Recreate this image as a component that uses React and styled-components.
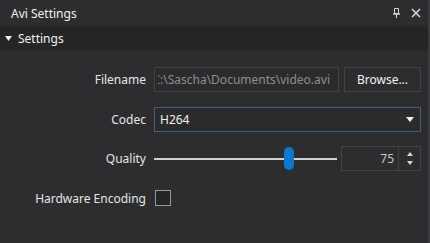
import React from "react";
import styled, { createGlobalStyle } from "styled-components";

const GlobalStyle = createGlobalStyle`
  html, body {
    margin: 0;
    padding: 0;
    background: #2d2d30;
  }
  * {
    box-sizing: border-box;
  }
`;

export default function App() {
  const quality = 75;

  return (
    <Panel>
      <GlobalStyle />
      <TitleBar>
        <Title>Avi Settings</Title>
        <TitleIcons>
          <svg width="7" height="10" viewBox="0 0 7 10">
            <path d="M1.5 0.5h4v5h-4z" fill="none" stroke="#d6d6d6" strokeWidth="1" />
            <path d="M0 6h7" stroke="#d6d6d6" strokeWidth="1.4" />
            <path d="M3.5 6v4" stroke="#d6d6d6" strokeWidth="1" />
          </svg>
          <svg width="10" height="10" viewBox="0 0 10 10">
            <path d="M1 1L9 9M9 1L1 9" stroke="#d6d6d6" strokeWidth="1.6" />
          </svg>
        </TitleIcons>
      </TitleBar>

      <SectionHeader>
        <svg width="7" height="5" viewBox="0 0 7 5">
          <path d="M0 0h7L3.5 5z" fill="#f1f1f1" />
        </svg>
        <span>Settings</span>
      </SectionHeader>

      <Form>
        <Label>Filename</Label>
        <Inline>
          <TextBox $disabled>
            <Clip>C:\Sascha\Documents\video.avi</Clip>
          </TextBox>
          <Button>Browse...</Button>
        </Inline>

        <Label>Codec</Label>
        <Select>
          <span>H264</span>
          <svg width="8" height="5" viewBox="0 0 8 5">
            <path d="M0 0h8L4 5z" fill="#f1f1f1" />
          </svg>
        </Select>

        <Label>Quality</Label>
        <Inline>
          <Slider>
            <Track />
            <Thumb style={{ left: `calc((100% - 10px) * ${quality / 100})` }} />
          </Slider>
          <SpinBox>
            <SpinValue>{quality}</SpinValue>
            <SpinButtons>
              <svg width="6" height="4" viewBox="0 0 6 4">
                <path d="M0 4h6L3 0z" fill="#d6d6d6" />
              </svg>
              <svg width="6" height="4" viewBox="0 0 6 4">
                <path d="M0 0h6L3 4z" fill="#d6d6d6" />
              </svg>
            </SpinButtons>
          </SpinBox>
        </Inline>

        <Label>Hardware Encoding</Label>
        <Inline>
          <CheckBox />
        </Inline>
      </Form>
    </Panel>
  );
}

const Panel = styled.div`
  width: 430px;
  height: 243px;
  display: flex;
  flex-direction: column;
  background: #2d2d30;
  border-right: 2px solid #3b3b3f;
  font-family: "Noto Sans", "Open Sans", sans-serif;
  font-size: 12px;
  color: #f1f1f1;
`;

const TitleBar = styled.div`
  height: 26px;
  display: flex;
  align-items: center;
  justify-content: space-between;
  padding: 0 7px 0 11px;
  background: #2d2d30;
`;

const Title = styled.span`
  color: #f1f1f1;
`;

const TitleIcons = styled.div`
  display: flex;
  align-items: center;
  gap: 11px;
`;

const SectionHeader = styled.div`
  height: 25px;
  display: flex;
  align-items: center;
  gap: 6px;
  padding-left: 5px;
  background: #252526;
`;

const Form = styled.div`
  display: grid;
  grid-template-columns: 146px 1fr;
  grid-auto-rows: 25px;
  column-gap: 8px;
  row-gap: 14.5px;
  padding: 16px 7px 0 0;
`;

const Label = styled.div`
  display: flex;
  align-items: center;
  justify-content: flex-end;
  color: #e6e6e6;
`;

const Inline = styled.div`
  display: flex;
  align-items: center;
  gap: 5px;
  min-width: 0;
`;

const TextBox = styled.div`
  flex: 1;
  height: 25px;
  min-width: 0;
  display: flex;
  align-items: center;
  padding: 0 8px 0 3px;
  background: #2b2b2d;
  border: 1px solid #434346;
  color: ${(p) => (p.$disabled ? "#8e8e8e" : "#f1f1f1")};
`;

const Clip = styled.div`
  flex: 1;
  min-width: 0;
  overflow: hidden;
  white-space: nowrap;
  display: flex;
  justify-content: flex-end;
`;

const Button = styled.div`
  flex-shrink: 0;
  width: 77px;
  height: 25px;
  display: flex;
  align-items: center;
  justify-content: center;
  background: #2d2d30;
  border: 1px solid #434346;
  color: #f1f1f1;
`;

const Select = styled.div`
  height: 25px;
  display: flex;
  align-items: center;
  justify-content: space-between;
  padding: 0 6px 0 5px;
  background: #2b2b2d;
  border: 1px solid #3e5f8a;
  color: #f1f1f1;
`;

const Slider = styled.div`
  position: relative;
  width: 183px;
  height: 25px;
  display: flex;
  align-items: center;
`;

const Track = styled.div`
  width: 100%;
  height: 2px;
  background: #cfcfcf;
`;

const Thumb = styled.div`
  position: absolute;
  top: 1px;
  width: 10px;
  height: 23px;
  border-radius: 5px;
  background: #0a79d1;
`;

const SpinBox = styled.div`
  margin-left: -1px;
  width: 80px;
  height: 25px;
  display: flex;
  border: 1px solid #434346;
  background: #2d2d30;
`;

const SpinValue = styled.div`
  flex: 1;
  display: flex;
  align-items: center;
  justify-content: flex-end;
  padding-right: 4px;
  border-right: 1px solid #434346;
  color: #c8c8c8;
`;

const SpinButtons = styled.div`
  width: 21px;
  display: flex;
  flex-direction: column;
  align-items: center;
  justify-content: center;
  gap: 5px;
`;

const CheckBox = styled.div`
  width: 16px;
  height: 16px;
  margin-left: 1px;
  border: 1px solid #9a9a9a;
  background: #252526;
`;
